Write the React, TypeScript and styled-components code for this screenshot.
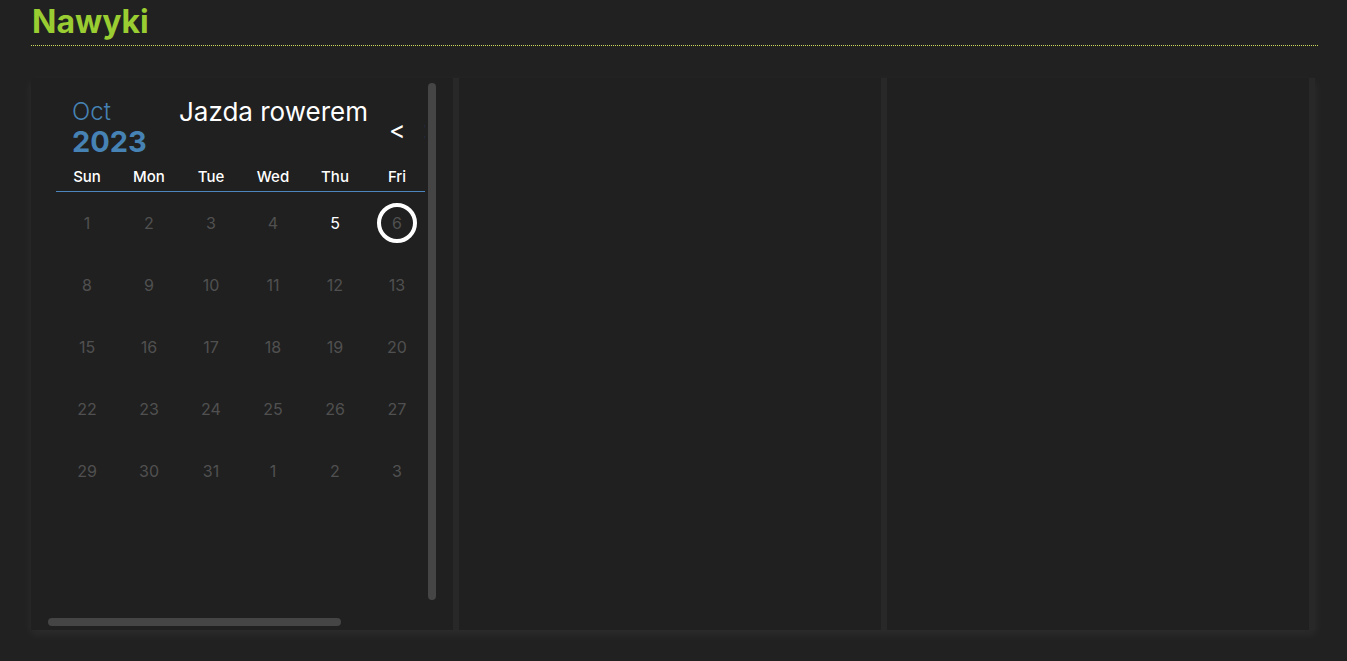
import React from "react";
import styled, { createGlobalStyle, css } from "styled-components";

const GlobalStyle = createGlobalStyle`
  html, body {
    margin: 0;
    padding: 0;
    background: #212121;
    font-family: Inter, "Noto Sans", sans-serif;
  }
  * { box-sizing: border-box; }
`;

const Page = styled.div`
  width: 1347px;
  height: 661px;
  background: #212121;
  overflow: hidden;
`;

const Header = styled.header`
  margin: 0 29px 0 31px;
  padding: 2px 0 3px;
  border-bottom: 1px dotted #d2dc5c;
`;

const Title = styled.h1`
  margin: 0;
  padding-left: 1px;
  font-size: 32px;
  line-height: 40px;
  font-weight: 700;
  color: #9acd32;
`;

const Board = styled.main`
  display: grid;
  grid-template-columns: repeat(3, 428px);
  margin: 32px 0 0 31px;
  width: 1284px;
  height: 552px;
  box-shadow: 0 4px 10px rgba(255, 255, 255, 0.06);
`;

const Panel = styled.section`
  position: relative;
  background: #202020;
  border-right: 6px solid #282828;
  overflow: hidden;
`;

const Viewport = styled.div`
  width: 394px;
  height: 100%;
  overflow: hidden;
  padding: 19px 0 0 25px;
`;

const Calendar = styled.div`
  width: 434px;
`;

const CalHead = styled.div`
  display: flex;
  align-items: flex-start;
  height: 61px;
`;

const MonthBlock = styled.div`
  width: 123px;
  padding-left: 16px;
  color: #4682b4;
`;

const Month = styled.div`
  margin-top: 1px;
  font-size: 24px;
  line-height: 27px;
  font-weight: 300;
`;

const Year = styled.div`
  margin-top: 1px;
  font-size: 29px;
  line-height: 32px;
  font-weight: 700;
`;

const HabitName = styled.div`
  width: 210px;
  font-size: 26px;
  line-height: 30px;
  color: #ffffff;
  white-space: nowrap;
`;

const Nav = styled.div`
  display: flex;
  gap: 17px;
  margin-top: 19px;
`;

const NavButton = styled.span`
  font-size: 25px;
  line-height: 28px;
  font-weight: 400;
  color: #ffffff;
  cursor: pointer;
`;

const Weekdays = styled.div`
  display: grid;
  grid-template-columns: repeat(7, 62px);
  margin-top: 10px;
  padding-bottom: 6px;
  border-bottom: 1px solid #4b87bd;
`;

const Weekday = styled.div`
  text-align: center;
  font-size: 15px;
  line-height: 17px;
  font-weight: 500;
  color: #ffffff;
`;

const Days = styled.div`
  display: grid;
  grid-template-columns: repeat(7, 62px);
  grid-auto-rows: 62px;
`;

const Day = styled.div<{ $done?: boolean; $today?: boolean }>`
  display: flex;
  align-items: center;
  justify-content: center;
  font-size: 16px;
  color: ${(p) => (p.$done ? "#ffffff" : "#505050")};

  span {
    display: flex;
    align-items: center;
    justify-content: center;
    width: 40px;
    height: 40px;
    border-radius: 50%;
    ${(p) =>
      p.$today &&
      css`
        border: 4px solid #ffffff;
      `}
  }
`;

const Thumb = styled.div<{ $horizontal?: boolean }>`
  position: absolute;
  background: #454545;
  border-radius: 4px;
  ${(p) =>
    p.$horizontal
      ? css`
          left: 17px;
          bottom: 4px;
          width: 293px;
          height: 8px;
        `
      : css`
          left: 397px;
          top: 5px;
          width: 8px;
          height: 517px;
        `}
`;

const weekdays = ["Sun", "Mon", "Tue", "Wed", "Thu", "Fri", "Sat"];

const days: number[] = [
  ...Array.from({ length: 31 }, (_, i) => i + 1),
  1, 2, 3, 4,
];

export default function App() {
  return (
    <Page>
      <GlobalStyle />
      <Header>
        <Title>Nawyki</Title>
      </Header>
      <Board>
        <Panel>
          <Viewport>
            <Calendar>
              <CalHead>
                <MonthBlock>
                  <Month>Oct</Month>
                  <Year>2023</Year>
                </MonthBlock>
                <HabitName>Jazda rowerem</HabitName>
                <Nav>
                  <NavButton>&lt;</NavButton>
                  <NavButton>&gt;</NavButton>
                </Nav>
              </CalHead>
              <Weekdays>
                {weekdays.map((d) => (
                  <Weekday key={d}>{d}</Weekday>
                ))}
              </Weekdays>
              <Days>
                {days.map((d, i) => (
                  <Day key={i} $done={i === 4} $today={i === 5}>
                    <span>{d}</span>
                  </Day>
                ))}
              </Days>
            </Calendar>
          </Viewport>
          <Thumb />
          <Thumb $horizontal />
        </Panel>
        <Panel />
        <Panel />
      </Board>
    </Page>
  );
}
